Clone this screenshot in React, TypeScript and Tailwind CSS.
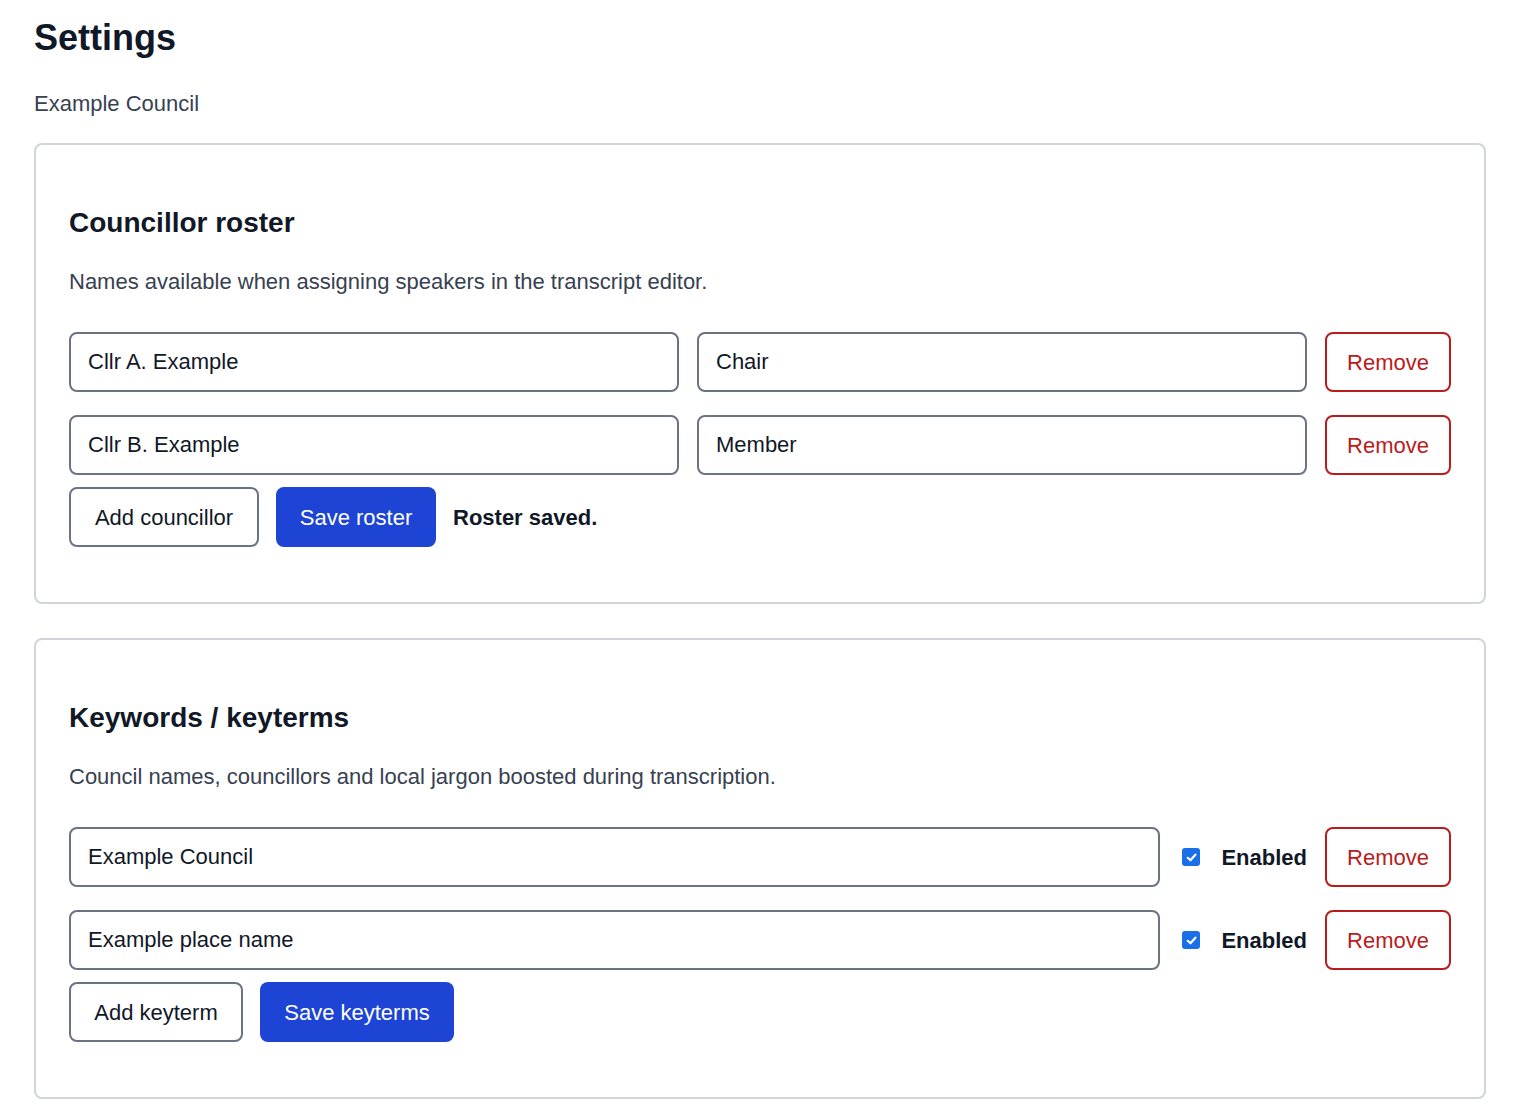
import React from "react";

const font = { fontFamily: '"Liberation Sans", Arial, sans-serif' };

function Input({ value, className = "" }: { value: string; className?: string }) {
  return (
    <input
      defaultValue={value}
      className={`h-[60px] rounded-[8px] border-2 border-[#6b7280] px-[17px] text-[22px] text-[#111827] outline-none ${className}`}
    />
  );
}

function RemoveBtn() {
  return (
    <button className="h-[60px] w-[126px] shrink-0 rounded-[8px] border-2 border-[#b91c1c] bg-white text-[22px] text-[#b91c1c]">
      Remove
    </button>
  );
}

function Check() {
  return (
    <span className="flex h-[18px] w-[18px] items-center justify-center rounded-[3px] bg-[#1a6fe8]">
      <svg width="13" height="13" viewBox="0 0 12 12"><path d="M2.5 6.3 5 8.6 9.6 3.4" stroke="white" strokeWidth="2" fill="none" strokeLinecap="round" strokeLinejoin="round" /></svg>
    </span>
  );
}

function Card({ title, desc, children }: { title: string; desc: string; children: React.ReactNode }) {
  return (
    <section className="rounded-[8px] border-2 border-[#d1d5db] px-[33px] pt-[33px] pb-[55px]">
      <h2 className="mt-[28px] text-[28px] leading-[34px] font-bold text-[#111827]">{title}</h2>
      <p className="mt-[27px] text-[22px] leading-[30px] text-[#374151]">{desc}</p>
      <div className="mt-[35px] flex flex-col gap-[23px]">{children}</div>
    </section>
  );
}

export default function App() {
  return (
    <div style={font} className="min-h-[1118px] bg-white px-[34px] pt-[16px] text-[#111827]">
      <h1 className="text-[36px] leading-[44px] font-bold">Settings</h1>
      <p className="mt-[29px] text-[22px] leading-[30px] text-[#374151]">Example Council</p>
      <div className="mt-[24px] flex flex-col gap-[34px]">
        <Card title="Councillor roster" desc="Names available when assigning speakers in the transcript editor.">
          {[["Cllr A. Example", "Chair"], ["Cllr B. Example", "Member"]].map(([n, r]) => (
            <div key={n} className="flex gap-[18px]">
              <Input value={n} className="w-[611px]" />
              <Input value={r} className="w-[611px]" />
              <RemoveBtn />
            </div>
          ))}
          <div className="-mt-[11px] flex items-center gap-[17px]">
            <button className="h-[60px] w-[190px] rounded-[8px] border-2 border-[#6b7280] bg-white text-[22px]">Add councillor</button>
            <button className="h-[60px] w-[160px] rounded-[8px] bg-[#1d44d4] text-[22px] text-white">Save roster</button>
            <span className="text-[22px] font-bold">Roster saved.</span>
          </div>
        </Card>
        <Card title="Keywords / keyterms" desc="Council names, councillors and local jargon boosted during transcription.">
          {["Example Council", "Example place name"].map((n) => (
            <div key={n} className="flex items-center gap-[18px]">
              <Input value={n} className="w-[1096px]" />
              <span className="ml-[4px]"><Check /></span>
              <span className="ml-[3px] text-[22px] font-bold">Enabled</span>
              <RemoveBtn />
            </div>
          ))}
          <div className="-mt-[11px] flex items-center gap-[17px]">
            <button className="h-[60px] w-[174px] rounded-[8px] border-2 border-[#6b7280] bg-white text-[22px]">Add keyterm</button>
            <button className="h-[60px] w-[194px] rounded-[8px] bg-[#1d44d4] text-[22px] text-white">Save keyterms</button>
          </div>
        </Card>
      </div>
    </div>
  );
}
